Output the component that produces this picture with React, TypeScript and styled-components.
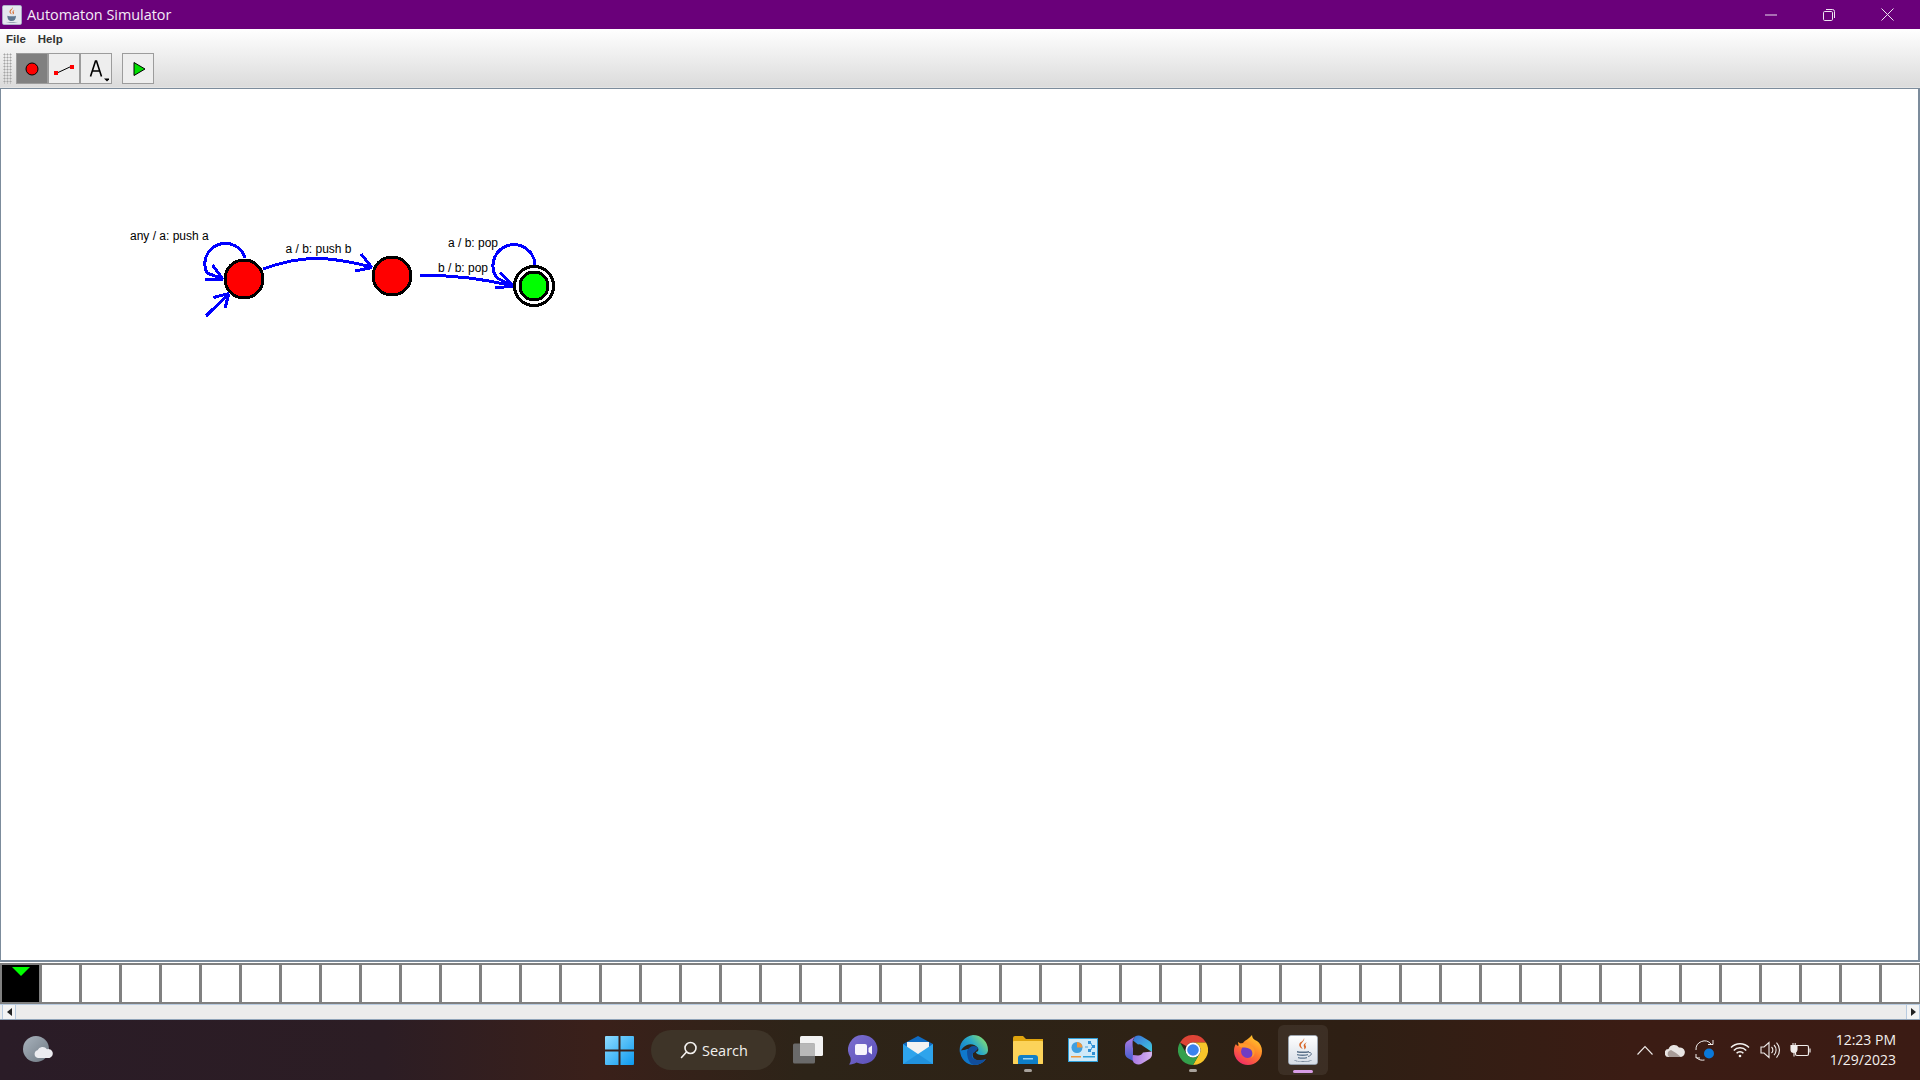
import React from "react";
import styled, { createGlobalStyle } from "styled-components";

const Global = createGlobalStyle`
  html, body { margin: 0; padding: 0; height: 100%; overflow: hidden; background: #fff; }
  #root { height: 100%; }
  * { box-sizing: border-box; }
`;
const App_ = styled.div`
  width: 1920px; height: 1080px; display: flex; flex-direction: column; overflow: hidden;
  font-family: "Liberation Sans", Arial, sans-serif;
`;
const TitleBar = styled.div`
  height: 29px; flex: none; background: #6a007a; display: flex; align-items: center; color: #fff; padding-right: 3px;
`;
const AppIcon = styled.svg`width: 20px; height: 20px; margin-left: 2px; margin-right: 5px; flex: none;`;
const TitleText = styled.div`
  flex: 1; font-family: "Open Sans", "Noto Sans", sans-serif; font-size: 14.4px; color: #f4ecf6;
`;
const WinButton = styled.div`
  width: 58.5px; height: 29px; display: flex; align-items: center; justify-content: center;
`;
const ChromeArea = styled.div`
  height: 58px; flex: none; background: linear-gradient(#ffffff 0%, #dbdbdb 100%); display: flex; flex-direction: column;
`;
const MenuBar = styled.div`
  height: 19px; display: flex; align-items: center; padding: 0 0 0 6px; gap: 12px;
  font-size: 11.5px; font-weight: 700; color: #333;
`;
const ToolBar = styled.div`
  display: flex; align-items: flex-start; padding: 5px 0 0 3px;
`;
const Grip = styled.div`
  width: 9px; height: 31px; margin-right: 4px;
  background-image: radial-gradient(#a4a4a4 0.9px, transparent 1.1px);
  background-size: 3px 3px;
`;
const ToolButton = styled.div<{ $pressed?: boolean; $gap?: boolean }>`
  width: 32px; height: 31px; margin-left: ${(p) => (p.$gap ? "10px" : "0")};
  border: 1.5px solid #9c9c9c; background: ${(p) => (p.$pressed ? "#808080" : "#eeeeee")};
  display: flex; align-items: center; justify-content: center; position: relative;
`;
const ToolIcon = styled.svg`width: 26px; height: 26px; display: block;`;
const Separator = styled.div`height: 1px; flex: none; background: #e4e4e4;`;
const Canvas = styled.div`
  flex: none; height: 874px; background: #fff; border: 2px solid #7c8c9c; border-width: 1.5px 2px 2px 1.5px; overflow: hidden;
`;
const Diagram = styled.svg`display: block; width: 1917px; height: 871px;`;
const TapeStrip = styled.div`
  height: 41px; flex: none; display: flex; gap: 3px; padding: 2px 0 2px 2px; background: #808080; overflow: hidden;
  margin-top: 1px;
`;
const Cell = styled.div<{ $head?: boolean }>`
  width: 37px; flex: none; background: ${(p) => (p.$head ? "#000" : "#fff")}; display: flex; justify-content: center; padding-top: 2px;
`;
const HeadMark = styled.div`
  width: 0; height: 0; border-left: 9px solid transparent; border-right: 9px solid transparent; border-top: 9px solid #00ff00;
`;
const ScrollBar = styled.div`
  height: 16px; flex: none; display: flex; background: #ececec; padding-left: 2px;
  border-top: 1px solid #b8cbe0; border-bottom: 1px solid #8fa3b8;
`;
const ScrollTrack = styled.div`flex: 1;`;
const ScrollBtn = styled.div`
  width: 14px; display: flex; align-items: center; justify-content: center; background: #f4f4f4;
  border-right: 1px solid #b8cbe0; border-left: 1px solid #b8cbe0;
`;
const Tri = styled.div<{ $dir: "l" | "r" }>`
  width: 0; height: 0; border-top: 4.5px solid transparent; border-bottom: 4.5px solid transparent;
  ${(p) => (p.$dir === "l" ? "border-right: 5px solid #222;" : "border-left: 5px solid #222;")}
`;
const Taskbar = styled.div`
  flex: 1; display: flex; align-items: center; position: relative; color: #fff;
  background: linear-gradient(90deg, #2a1c27 0%, #2c1d24 20%, #3a201a 31%, #2d2418 42%, #2e2215 60%, #2e1f14 70%, #3b1c14 85%, #3b1b14 100%);
`;
const WeatherSlot = styled.div`width: 592px; flex: none; display: flex; padding-left: 23px;`;
const TaskSlot = styled.div<{ $active?: boolean }>`
  width: 55px; height: 50px; flex: none; display: flex; align-items: center; justify-content: center; position: relative; border-radius: 6px;
  ${(p) => p.$active && "background: rgba(255,255,255,0.07); width: 50px; margin: 0 2.5px;"}
`;
const Indicator = styled.div<{ $active?: boolean }>`
  position: absolute; bottom: ${(p) => (p.$active ? "2px" : "3px")}; left: 50%; transform: translateX(-50%);
  width: ${(p) => (p.$active ? "20px" : "8px")}; height: 3px; border-radius: 2px;
  background: ${(p) => (p.$active ? "#d79de6" : "#a8a29c")};
`;
const SearchPill = styled.div`
  width: 125px; height: 40px; flex: none; margin: 0 4.5px 0 4px; border-radius: 20px; background: #3e3428;
  display: flex; align-items: center; padding-left: 29px; gap: 4px;
  font-family: "Open Sans", "Noto Sans", sans-serif; font-size: 14.5px; color: #f2f0ee;
`;
const Tray = styled.div`
  position: absolute; top: 0; bottom: 0; left: 1630px; right: 24px; display: flex; align-items: center;
`;
const TrayIcon = styled.div<{ $w: number }>`
  width: ${(p) => p.$w}px; height: 30px; flex: none; display: flex; align-items: center; justify-content: center;
`;
const Clock = styled.div`
  flex: 1; text-align: right; font-family: "Open Sans", "Noto Sans", sans-serif; font-size: 14px; line-height: 20px; color: #f4f0ee;
`;

const JavaIcon = () => (
  <svg width="30" height="30" viewBox="0 0 30 30">
    <defs>
      <linearGradient id="jv" x1="0" y1="0" x2="0" y2="1">
        <stop offset="0" stopColor="#ffffff" /><stop offset="1" stopColor="#d6dde6" />
      </linearGradient>
    </defs>
    <rect x="0.5" y="0.5" width="29" height="29" rx="2.5" fill="url(#jv)" stroke="#9eb0c4" strokeWidth="0.6" />
    <path d="M16 3c1.5 3-4 5-3 8 .5 1.5 1.5 2 1.5 3-2-1-4-3-3-5.500C12.500 6.500 16 6 16 3z" fill="#d8682a" />
    <path d="M19 7c-3 1.500-4 3-3 5 .4 1 .5 1.500 0 2.500 2-1 2.500-2.500 1.500-4-.6-1 0-2 1.500-3.500z" fill="#d8682a" />
    <path d="M9 16c3 .8 9 .8 12 0v1.500c-3 .8-9 .8-12 0z" fill="#5a7088" />
    <path d="M9 19c3 .8 8 .8 11 0v1.300c-3 .8-8 .8-11 0zM10 22c3 .8 6 .8 9 0v1.200c-3 .8-6 .8-9 0z" fill="#5f7790" />
    <path d="M21 17.500c3-.5 3.500 3-1 4" fill="none" stroke="#5a7088" strokeWidth="1" />
    <path d="M6 25c4 1.800 14 1.800 18 0-2 2.500-16 2.500-18 0z" fill="#4b6078" />
  </svg>
);

const Weather = () => (
  <svg width="32" height="32" viewBox="0 0 32 32">
    <defs>
      <linearGradient id="wg" x1="0" y1="0" x2="1" y2="1">
        <stop offset="0" stopColor="#aab4be" /><stop offset="1" stopColor="#6e7882" />
      </linearGradient>
    </defs>
    <circle cx="13" cy="15" r="13" fill="url(#wg)" />
    <path d="M15 24a4 4 0 0 1-.5-7.800 5.500 5.500 0 0 1 9.500-1 4.500 4.500 0 0 1 2.500 8.800z" fill="#ececf0" />
  </svg>
);
const WinLogo = () => (
  <svg width="29" height="29" viewBox="0 0 29 29">
    <defs>
      <linearGradient id="wl" x1="0" y1="0" x2="1" y2="1">
        <stop offset="0" stopColor="#8fdcff" /><stop offset="1" stopColor="#0c9af0" />
      </linearGradient>
    </defs>
    <path d="M0 1a1 1 0 0 1 1-1h12.500v13.500H0zM15.500 0H28a1 1 0 0 1 1 1v12.500H15.500zM0 15.500h13.500V29H1a1 1 0 0 1-1-1zM15.500 15.500H29V28a1 1 0 0 1-1 1H15.500z" fill="url(#wl)" />
  </svg>
);
const SearchGlass = () => (
  <svg width="18" height="18" viewBox="0 0 18 18" fill="none" stroke="#f4f2f0" strokeWidth="1.6">
    <circle cx="10.500" cy="7" r="5.500" /><path d="M6.500 11L1.500 16.500" strokeLinecap="round" />
  </svg>
);
const TaskView = () => (
  <svg width="30" height="28" viewBox="0 0 30 28">
    <rect x="7" y="0" width="23" height="20" rx="1.500" fill="#f2f2f2" />
    <rect x="0" y="7.500" width="22" height="20" rx="1.500" fill="#6a6a6a" />
    <rect x="7" y="7.500" width="15" height="12.500" fill="#b8b8b8" />
  </svg>
);
const Meet = () => (
  <svg width="30" height="30" viewBox="0 0 30 30">
    <defs>
      <linearGradient id="mt" x1="0" y1="0" x2="1" y2="1">
        <stop offset="0" stopColor="#7c6fd0" /><stop offset="1" stopColor="#5a4fb8" />
      </linearGradient>
    </defs>
    <path d="M15 0a14.500 14.500 0 1 1-6.500 27.500C6 29 3.500 29.500 1 29.500c1.500-1.500 2-3.500 1.500-7A14.500 14.500 0 0 1 15 0z" fill="url(#mt)" />
    <rect x="7" y="9" width="12" height="11" rx="2" fill="#f6f4fc" />
    <path d="M20.500 13l3.500-2.500v9L20.500 17z" fill="#f6f4fc" />
  </svg>
);
const Mail = () => (
  <svg width="30" height="28" viewBox="0 0 30 28">
    <path d="M0 8L15 0l15 8v3H0z" fill="#0f6cc4" />
    <path d="M4 6h22v9l-11 5-11-5z" fill="#f2f2f2" />
    <path d="M0 8l15 10L30 8v20H0z" fill="#2ea4ec" />
    <path d="M0 28L15 18l15 10z" fill="#1c8ad8" opacity="0.7" />
  </svg>
);
const Edge = () => (
  <svg width="30" height="30" viewBox="0 0 30 30">
    <defs>
      <linearGradient id="eg" x1="0" y1="0.9" x2="1" y2="0.3">
        <stop offset="0" stopColor="#0f78cc" /><stop offset="0.55" stopColor="#2aa8c8" /><stop offset="1" stopColor="#86e070" />
      </linearGradient>
    </defs>
    <path d="M15 0A15 15 0 0 1 30 15c0 3-2 5-6 5-3 0-6-1-6-3 2 0 3-2 2-4-2-3-7-5-11-3-5 2-7 7-7 8A15 15 0 0 1 15 0z" fill="url(#eg)" />
    <path d="M2 15C2 24 9 30 16 30c5 0 9-2 12-6-5 3-11 2-13-2-1-3 0-5 2-6-3-3-8-2-11-1-2 0-3 1-4 0z" fill="#0f78cc" />
    <path d="M9 16c1-3 4-5 7-5 2 0 3 1 4 2-1 3-3 3-3 4-3 1-4 4-2 6 2 2 6 3 13 1-3 4-7 6-12 6-2 0-7-3-7-14z" fill="#114e9c" />
  </svg>
);
const Folder = () => (
  <svg width="30" height="28" viewBox="0 0 30 28">
    <path d="M0 2a2 2 0 0 1 2-2h8l3 3h17v25H0z" fill="#dfa40e" />
    <rect x="0" y="5" width="30" height="23" rx="1" fill="#fcd35a" />
    <path d="M5 28v-6a3 3 0 0 1 3-3h14a3 3 0 0 1 3 3v6z" fill="#0f7fc8" />
    <rect x="10" y="22" width="10" height="1.500" fill="#9bd4f4" />
  </svg>
);
const ControlPanel = () => (
  <svg width="30" height="24" viewBox="0 0 30 24">
    <rect x="0.500" y="0.500" width="29" height="23" fill="#cfe9f8" stroke="#2f9fd8" />
    <circle cx="9" cy="9.500" r="5.500" fill="#3f9fe0" />
    <path d="M9 9.500V4a5.500 5.500 0 0 1 5.500 5.500z" fill="#f0963a" />
    <g fill="#2f8fd4"><rect x="20" y="3" width="3" height="3" /><rect x="24" y="7" width="3" height="3" /><rect x="20" y="11" width="3" height="3" /><rect x="24" y="14" width="3" height="3" /></g>
    <path d="M17 9h3M23 5l1 3M23 12l1-3" stroke="#2f8fd4" strokeWidth="0.8" />
    <rect x="3" y="18" width="10" height="1.500" fill="#f0963a" />
    <rect x="15" y="18" width="12" height="1.500" fill="#2f9fd8" />
  </svg>
);
const M365 = () => (
  <svg width="27" height="30" viewBox="0 0 27 30">
    <defs>
      <linearGradient id="m1" x1="0" y1="0" x2="1" y2="1"><stop offset="0" stopColor="#3a6fd8" /><stop offset="1" stopColor="#40cce0" /></linearGradient>
      <linearGradient id="m2" x1="0" y1="0" x2="0" y2="1"><stop offset="0" stopColor="#b47ce4" /><stop offset="1" stopColor="#3a5ccc" /></linearGradient>
      <linearGradient id="m3" x1="0" y1="0" x2="1" y2="0"><stop offset="0" stopColor="#a878e4" /><stop offset="1" stopColor="#d8b4f0" /></linearGradient>
    </defs>
    <path d="M10 1.500c2-1.200 5-1.200 7 0l7 4.200c2 1.200 3 3 3 5v6.300l-9-6a5.500 5.500 0 0 0-5-1.500l-5-4z" fill="url(#m1)" />
    <path d="M0 10.700c0-2.200 1-4 3-5l7-4.200-2 3c-.5 1-.5 6 0 9v9c0 2 1 3.500 2 4.500l-7-3.700c-2-1.200-3-3-3-5z" fill="url(#m2)" />
    <path d="M8 20l5 .5a5.500 5.500 0 0 0 5-3l9-1v2.800c0 2-1 3.800-3 5l-7 4.200c-2 1.200-5 1.200-7 0-2-1-3-4-2-8.500z" fill="url(#m3)" />
  </svg>
);
const Chrome = () => (
  <svg width="30" height="30" viewBox="0 0 30 30">
    <path d="M2 7.500A15 15 0 0 1 28 7.500H15A7.500 7.500 0 0 0 8.500 11.250z" fill="#dd4436" />
    <path d="M28 7.500A15 15 0 0 1 15 30L21.500 18.750A7.500 7.500 0 0 0 15 7.500z" fill="#f7c52a" />
    <path d="M2 7.500L8.500 18.750A7.500 7.500 0 0 0 21.500 18.750L15 30A15 15 0 0 1 2 7.500z" fill="#34a04c" />
    <circle cx="15" cy="15" r="7.500" fill="#fff" />
    <circle cx="15" cy="15" r="5.800" fill="#3b82ee" />
  </svg>
);
const Firefox = () => (
  <svg width="30" height="30" viewBox="0 0 30 30">
    <defs>
      <linearGradient id="ff" x1="0.800" y1="0" x2="0.200" y2="1">
        <stop offset="0" stopColor="#ffd02c" /><stop offset="0.5" stopColor="#ff7a2a" /><stop offset="1" stopColor="#f0246c" />
      </linearGradient>
    </defs>
    <path d="M19 0c0 3 2 5 5 6 3 2 5 6 5 10a14 14 0 1 1-28 0c0-3 .5-5 2-7 .5 1 1 1.500 2 2 1-2 3-3 5-3 2-3 6-4 9-8z" fill="url(#ff)" />
    <circle cx="14.500" cy="16.500" r="6.500" fill="#6f3cc4" />
    <path d="M5 7c2 1 3 2 5 2 3 0 7 0 10 3 3 4 2 9-2 11 2-3 2-7-1-9-3-2-7-1-10-2-1-1-2-3-2-5z" fill="#ff9a2c" />
  </svg>
);
const CloudTray = () => (
  <svg width="20" height="14" viewBox="0 0 20 14">
    <path d="M4 14a4 4 0 0 1-.5-8A6 6 0 0 1 14 4.500 4.800 4.800 0 0 1 16 14z" fill="#e8e4e2" />
    <path d="M4 14a4 4 0 0 1 2-7l5 3 5 4z" fill="#a89c98" />
  </svg>
);
const SyncTray = () => (
  <svg width="22" height="24" viewBox="0 0 22 24" fill="none" stroke="#f0ecea" strokeWidth="1">
    <path d="M2 12a8.500 8.500 0 0 1 15-6M19 2v4.500h-5" />
    <path d="M6 20l-4-.1M2 16v4M2.500 19.500c2 2.500 5 3 8 2.500" />
    <circle cx="15" cy="15.500" r="5" fill="#0a78d8" stroke="none" />
  </svg>
);
const Wifi = () => (
  <svg width="20" height="16" viewBox="0 0 20 16" fill="none" stroke="#f4f2f0" strokeWidth="1.500">
    <path d="M1 5.500a12.500 12.500 0 0 1 18 0M3.800 8.500a8.500 8.500 0 0 1 12.400 0M6.600 11.300a4.500 4.500 0 0 1 6.800 0" />
    <circle cx="10" cy="14" r="1.300" fill="#f4f2f0" stroke="none" />
  </svg>
);
const Volume = () => (
  <svg width="20" height="18" viewBox="0 0 20 18" fill="none" stroke="#f0ecea" strokeWidth="1.100">
    <path d="M1 6h3l5-4.500v15L4 12H1zM11.500 6a4 4 0 0 1 0 6M14 4a7 7 0 0 1 0 10M16.500 1.500a11 11 0 0 1 0 15" />
  </svg>
);
const Battery = () => (
  <svg width="21" height="16" viewBox="0 0 21 16" fill="none" stroke="#f0ecea" strokeWidth="1.200">
    <rect x="5.500" y="3.500" width="13" height="10" rx="1.500" />
    <path d="M20 6.500v4" />
    <path d="M1 3.500h6v4a3 3 0 0 1-6 0zM3 1v2.500M5.200 1v2.500M4 10.500v4" fill="#f0ecea" strokeWidth="1.100" />
  </svg>
);

const BLUE = "#0000ff";
const Edges = styled.g`fill: none; stroke: ${BLUE}; stroke-width: 3px; shape-rendering: crispEdges;`;
const Label = styled.text`font-family: "Liberation Sans", Arial, sans-serif; font-size: 12px; fill: #000;`;
const StateRing = styled.circle<{ $fill: string }>`fill: ${(p) => p.$fill}; stroke: #000; stroke-width: 3px; shape-rendering: crispEdges;`;

export default function App() {
  const cellCount = 48;
  return (
    <App_>
      <Global />
      <TitleBar>
        <AppIcon viewBox="0 0 30 30">
          <rect x="0.500" y="0.500" width="29" height="29" rx="3" fill="#e4e8ee" stroke="#9eb0c4" />
          <path d="M16 3c1.500 3-4 5-3 8 .5 1.500 1.500 2 1.500 3-2-1-4-3-3-5.500C12.500 6.500 16 6 16 3z" fill="#d8682a" />
          <path d="M19 7c-3 1.500-4 3-3 5 .4 1 .5 1.500 0 2.500 2-1 2.500-2.500 1.500-4-.6-1 0-2 1.500-3.500z" fill="#d8682a" />
          <path d="M8 16c3 1 11 1 13 0-.2 5-2 8-6.500 8S8.300 21 8 16z" fill="#5f7790" />
          <path d="M6 25c4 1.800 14 1.800 18 0-2 2.500-16 2.500-18 0z" fill="#4b6078" />
        </AppIcon>
        <TitleText>Automaton Simulator</TitleText>
        <WinButton>
          <svg width="12" height="2" viewBox="0 0 12 2"><path d="M0 1h12" stroke="#e8dcec" strokeWidth="1" /></svg>
        </WinButton>
        <WinButton>
          <svg width="12" height="12" viewBox="0 0 12 12" fill="none" stroke="#efe6f2" strokeWidth="1">
            <rect x="0.500" y="2.500" width="9" height="9" rx="1.200" /><path d="M3 .5h6.500a2 2 0 0 1 2 2V9" />
          </svg>
        </WinButton>
        <WinButton>
          <svg width="13" height="13" viewBox="0 0 13 13" stroke="#efe6f2" strokeWidth="1"><path d="M.5.5l12 12M12.500.5l-12 12" /></svg>
        </WinButton>
      </TitleBar>
      <ChromeArea>
        <MenuBar><span>File</span><span>Help</span></MenuBar>
        <ToolBar>
          <Grip />
          <ToolButton $pressed>
            <ToolIcon viewBox="0 0 26 26"><circle cx="13" cy="13" r="6" fill="#f00" stroke="#000" strokeWidth="1" /></ToolIcon>
          </ToolButton>
          <ToolButton>
            <ToolIcon viewBox="0 0 26 26">
              <path d="M6 17L21 10" stroke="#000" strokeWidth="1" />
              <rect x="3" y="15" width="4" height="4" fill="#f00" /><rect x="19" y="9" width="4" height="4" fill="#f00" />
            </ToolIcon>
          </ToolButton>
          <ToolButton>
            <ToolIcon viewBox="0 0 26 26">
              <path d="M7.500 20.500L12.500 5h1l5 15.500M9.500 15h7" fill="none" stroke="#000" strokeWidth="1.600" />
              <path d="M21 22.500h6l-3 3z" fill="#000" />
            </ToolIcon>
          </ToolButton>
          <ToolButton $gap>
            <ToolIcon viewBox="0 0 26 26"><path d="M9 6.500L20 13 9 19.500z" fill="#00e000" stroke="#000" strokeWidth="1" /></ToolIcon>
          </ToolButton>
        </ToolBar>
      </ChromeArea>
      <Separator />
      <Canvas>
        <Diagram viewBox="1 89 1917 871">
          <Edges>
            <path d="M245 258A20.500 20.500 0 1 0 207 273L223 279" />
            <path d="M205 279.500H223M212.500 265L223 279.500" />
            <path d="M206 316L229 293.500M213.500 297.500L229 293.500M225 308L229 293.500" />
            <path d="M263 269C285 261 305 258 320 258.500C340 259 355 263 372 267" />
            <path d="M361 254L372 267.500M355 271L372 267.500" />
            <path d="M420 275.500C445 275 480 278 513 286" />
            <path d="M500 272.500L513 286M495 288L513 286" />
            <path d="M535 265A21 21 0 1 0 497 278L513 286" />
          </Edges>
          <StateRing cx={244} cy={279} r={19} $fill="#ff0000" />
          <StateRing cx={392} cy={276} r={19} $fill="#ff0000" />
          <StateRing cx={534} cy={286} r={19.500} $fill="#ffffff" />
          <StateRing cx={534} cy={286} r={14} $fill="#00ff00" />
          <Label x={130} y={240}>any / a: push a</Label>
          <Label x={285.500} y={253}>a / b: push b</Label>
          <Label x={448} y={247}>a / b: pop</Label>
          <Label x={438} y={272}>b / b: pop</Label>
        </Diagram>
      </Canvas>
      <TapeStrip>
        {Array.from({ length: cellCount }, (_, i) => (
          <Cell key={i} $head={i === 0}>{i === 0 && <HeadMark />}</Cell>
        ))}
      </TapeStrip>
      <ScrollBar>
        <ScrollBtn><Tri $dir="l" /></ScrollBtn>
        <ScrollTrack />
        <ScrollBtn><Tri $dir="r" /></ScrollBtn>
      </ScrollBar>
      <Taskbar>
        <WeatherSlot><Weather /></WeatherSlot>
        <TaskSlot><WinLogo /></TaskSlot>
        <SearchPill><SearchGlass /><span>Search</span></SearchPill>
        <TaskSlot><TaskView /></TaskSlot>
        <TaskSlot><Meet /></TaskSlot>
        <TaskSlot><Mail /></TaskSlot>
        <TaskSlot><Edge /></TaskSlot>
        <TaskSlot><Folder /><Indicator /></TaskSlot>
        <TaskSlot><ControlPanel /></TaskSlot>
        <TaskSlot><M365 /></TaskSlot>
        <TaskSlot><Chrome /><Indicator /></TaskSlot>
        <TaskSlot><Firefox /></TaskSlot>
        <TaskSlot $active><JavaIcon /><Indicator $active /></TaskSlot>
        <Tray>
          <TrayIcon $w={30}>
            <svg width="16" height="10" viewBox="0 0 16 10" fill="none" stroke="#f0ecea" strokeWidth="1.100"><path d="M.5 9.500L8 1.500l7.500 8" /></svg>
          </TrayIcon>
          <TrayIcon $w={30}><CloudTray /></TrayIcon>
          <TrayIcon $w={30}><SyncTray /></TrayIcon>
          <TrayIcon $w={40}><Wifi /></TrayIcon>
          <TrayIcon $w={20}><Volume /></TrayIcon>
          <TrayIcon $w={41}><Battery /></TrayIcon>
          <Clock><div>12:23 PM</div><div>1/29/2023</div></Clock>
        </Tray>
      </Taskbar>
    </App_>
  );
}
